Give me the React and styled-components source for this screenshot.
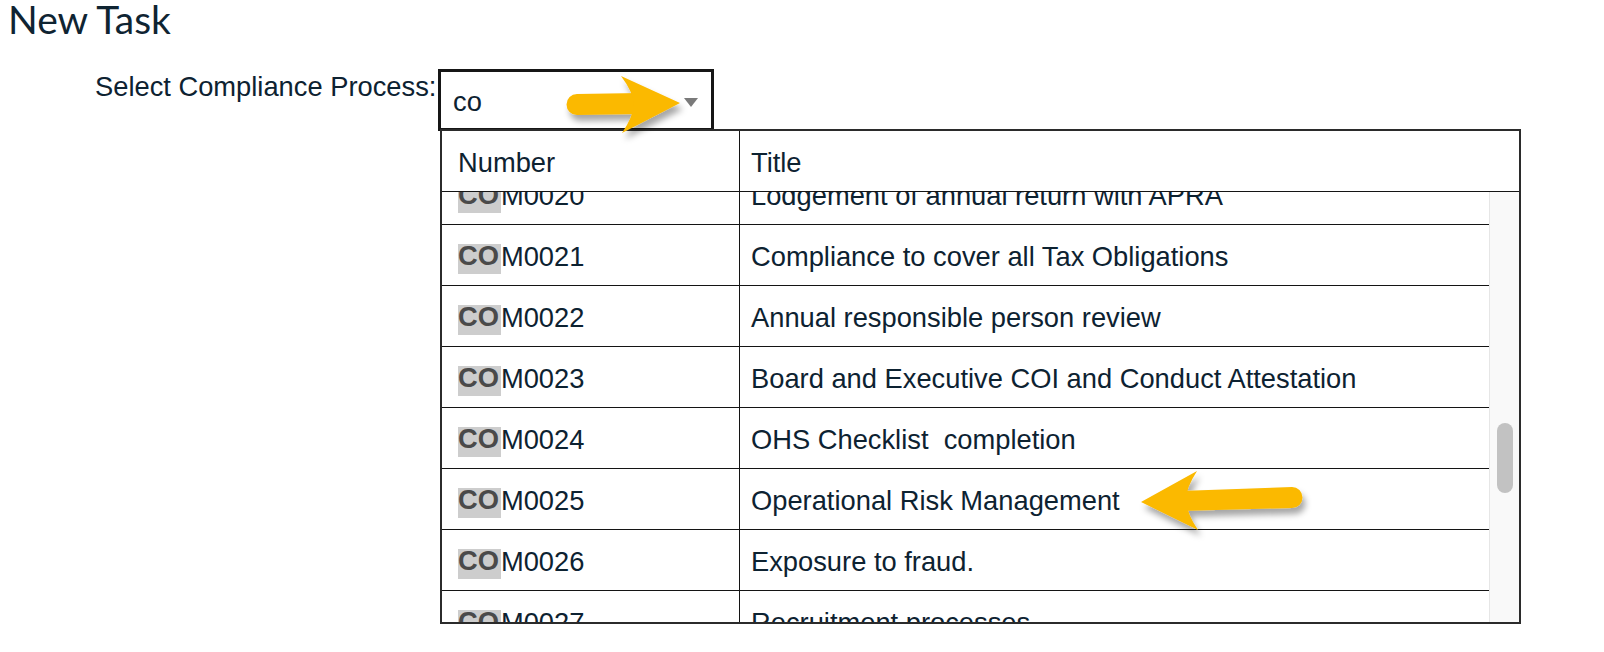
import React from 'react';
import styled, { createGlobalStyle } from 'styled-components';

const rows = [
  { number: 'COM0020', title: 'Lodgement of annual return with APRA' },
  { number: 'COM0021', title: 'Compliance to cover all Tax Obligations' },
  { number: 'COM0022', title: 'Annual responsible person review' },
  { number: 'COM0023', title: 'Board and Executive COI and Conduct Attestation' },
  { number: 'COM0024', title: 'OHS Checklist  completion' },
  { number: 'COM0025', title: 'Operational Risk Management' },
  { number: 'COM0026', title: 'Exposure to fraud.' },
  { number: 'COM0027', title: 'Recruitment processes' },
  { number: 'COM0028', title: 'Conflicts of interest register' },
];

const query = 'CO';

function Highlighted({ text }) {
  // mark the part of the code matched by the search text
  const n = query.length;
  return (
    <>
      <Match>{text.slice(0, n)}</Match>
      {text.slice(n)}
    </>
  );
}

function Arrows() {
  return (
    <Overlay width="1604" height="652" viewBox="0 0 1604 652">
      <defs>
        <filter id="arrowShadow" x="-20%" y="-40%" width="140%" height="180%">
          <feDropShadow dx="3" dy="6" stdDeviation="3" floodColor="#000" floodOpacity="0.35" />
        </filter>
      </defs>
      <g fill="#fbb900" filter="url(#arrowShadow)">
        <path d="M577 94 L640 93 L640 114 L577 115 A10.5 10.5 0 0 1 577 94 Z" />
        <path d="M680 103 L621 76 Q633 92 634 104 Q633 117 622 133 Z" />
        <path d="M1180 491 L1292 487 A10.5 10.5 0 0 1 1292 508 L1180 511 Z" />
        <path d="M1141 502 L1197 471 Q1186 488 1186 500 Q1187 514 1198 530 Z" />
      </g>
    </Overlay>
  );
}

export default function App() {
  return (
    <Page>
      <GlobalStyle />
      <Heading>New Task</Heading>
      <FormRow>
        <Label>Select Compliance Process:</Label>
        <Combo>
          <InputBox>
            <InputText>co</InputText>
            <Caret />
          </InputBox>
          <Dropdown>
            <HeaderRow>
              <HeadCell>Number</HeadCell>
              <HeadCell $last>Title</HeadCell>
            </HeaderRow>
            <Body>
              <RowViewport>
                <RowList>
                  {rows.map((r) => (
                    <Row key={r.number}>
                      <Cell>
                        <Highlighted text={r.number} />
                      </Cell>
                      <Cell $last>{r.title}</Cell>
                    </Row>
                  ))}
                </RowList>
              </RowViewport>
              <Track>
                <Thumb />
              </Track>
            </Body>
          </Dropdown>
        </Combo>
      </FormRow>
      <Arrows />
    </Page>
  );
}

const GlobalStyle = createGlobalStyle`
  html, body {
    margin: 0;
    padding: 0;
    background: #fff;
  }
  body {
    font-family: "Liberation Sans", Arial, sans-serif;
    color: #0d2231;
  }
`;

const Page = styled.div`
  position: relative;
  width: 1604px;
  height: 652px;
  overflow: hidden;
  background: #fff;
`;

const Heading = styled.h1`
  margin: 0;
  padding-left: 8px;
  font-family: Lato, "Open Sans", sans-serif;
  font-weight: 400;
  font-size: 39px;
  line-height: 39px;
  color: #0f2432;
`;

const FormRow = styled.div`
  display: flex;
  align-items: flex-start;
  margin-top: 30px;
  padding-left: 95px;
`;

const Label = styled.label`
  flex: none;
  width: 343px;
  padding-top: 2px;
  font-size: 27.3px;
  line-height: 31px;
  color: #0d2231;
`;

const Combo = styled.div`
  position: relative;
`;

const InputBox = styled.div`
  box-sizing: border-box;
  width: 276px;
  height: 62px;
  border: 3px solid #161616;
  display: flex;
  align-items: center;
  justify-content: space-between;
  padding: 4px 13px 0 12px;
  background: #fff;
`;

const InputText = styled.span`
  font-size: 27.3px;
  color: #0d2231;
`;

const Caret = styled.span`
  width: 0;
  height: 0;
  margin-top: 1px;
  border-left: 7.5px solid transparent;
  border-right: 7.5px solid transparent;
  border-top: 9px solid #7a7a7a;
`;

const Dropdown = styled.div`
  position: absolute;
  top: 60px;
  left: 2px;
  box-sizing: border-box;
  width: 1081px;
  height: 495px;
  border: 2px solid #2b2b2b;
  background: #fff;
  display: flex;
  flex-direction: column;
  font-size: 27.3px;
`;

const HeaderRow = styled.div`
  display: grid;
  grid-template-columns: 298px 1fr;
  height: 61px;
  box-sizing: border-box;
  border-bottom: 1px solid #141414;
`;

const HeadCell = styled.div`
  display: flex;
  align-items: center;
  padding-top: 3px;
  padding-left: ${(p) => (p.$last ? '11px' : '16px')};
  border-right: ${(p) => (p.$last ? 'none' : '1px solid #141414')};
  color: #0d2231;
`;

const Body = styled.div`
  flex: 1;
  display: grid;
  grid-template-columns: 1fr 30px;
  min-height: 0;
`;

const RowViewport = styled.div`
  overflow: hidden;
`;

const RowList = styled.div`
  margin-top: -28px;
`;

const Row = styled.div`
  display: grid;
  grid-template-columns: 298px 1fr;
  height: 61px;
  box-sizing: border-box;
  border-bottom: 1px solid #141414;
`;

const Cell = styled.div`
  display: flex;
  align-items: center;
  padding-top: 4px;
  padding-left: ${(p) => (p.$last ? '11px' : '16px')};
  border-right: ${(p) => (p.$last ? 'none' : '1px solid #141414')};
  white-space: pre;
  color: #0d2231;
`;

const Match = styled.span`
  font-weight: 700;
  color: #4a4a4a;
  padding: 0 2px 2px 0;
  background: linear-gradient(#cdcdcd, #cdcdcd) left bottom / 100% 30px no-repeat;
`;

const Track = styled.div`
  display: flex;
  flex-direction: column;
  background: #f9f9f9;
  border-left: 1px solid #e6e6e6;
  padding: 0 6px 0 7px;
`;

const Thumb = styled.div`
  margin-top: 231px;
  height: 70px;
  border-radius: 8px;
  background: #c2c2c2;
`;

const Overlay = styled.svg`
  position: absolute;
  left: 0;
  top: 0;
  pointer-events: none;
`;
